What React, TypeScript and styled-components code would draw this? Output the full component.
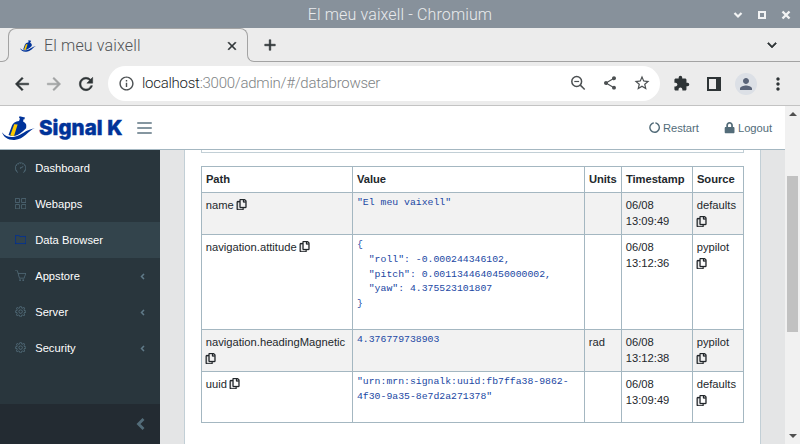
import React from "react";
import styled, { createGlobalStyle } from "styled-components";
import {
  MdAdd, MdArrowBack, MdArrowForward, MdClose, MdExpandMore, MdExtension, MdInfoOutline,
  MdMoreVert, MdPerson, MdRefresh, MdShare, MdStarBorder,
} from "react-icons/md";
import { SlBasket, SlFolder, SlGrid, SlSettings, SlSpeedometer } from "react-icons/sl";
import { FaCircleNotch, FaLock, FaRegCopy, FaAngleLeft } from "react-icons/fa";

const GlobalStyle = createGlobalStyle`
  * { box-sizing: border-box; }
  body { margin: 0; overflow: hidden; font-family: "Liberation Sans", Arial, sans-serif; }
  svg { display: block; flex: none; }
  svg path[fill="none"] { stroke: none; }
`;

const Window = styled.div`
  width: 800px;
  height: 444px;
  display: flex;
  flex-direction: column;
  background: #ececec;
  overflow: hidden;
`;

const TitleBar = styled.div`
  height: 28px;
  flex: none;
  display: grid;
  grid-template-columns: 1fr auto 1fr;
  align-items: center;
  background: #87919b;
  color: #e9ebed;
  font: 300 16px/28px Roboto, sans-serif;
`;

const WindowTitle = styled.span`
  grid-column: 2;
  white-space: nowrap;
  letter-spacing: 0.13px;
  padding-top: 1px;
`;

const WindowControls = styled.div`
  display: flex;
  justify-content: flex-end;
  gap: 14px;
  padding-right: 9px;
`;

const TabStrip = styled.div`
  height: 34px;
  flex: none;
  display: flex;
`;

const StripEdge = styled.div`
  width: 9px;
  border-bottom: 1px solid #a3a3a3;
  border-right: 1px solid #a3a3a3;
  border-bottom-right-radius: 7px;
  margin-top: 8px;
`;

const Tab = styled.div`
  width: 240px;
  height: 34px;
  margin-left: -1px;
  display: flex;
  align-items: center;
  border: 1px solid #a3a3a3;
  border-width: 1px 1px 0;
  border-radius: 8px 8px 0 0;
  padding: 0 8px 0 11px;
  color: #505356;
  font: 300 16px/32px Roboto, sans-serif;
  letter-spacing: 0.15px;
  clip-path: inset(0 0 7px 0);
`;

const TabTitle = styled.span`
  flex: 1;
  margin-left: 8px;
`;

const StripRest = styled.div`
  flex: 1;
  height: 34px;
  margin-left: -1px;
  display: flex;
  align-items: center;
  justify-content: space-between;
  padding: 0 19px 0 13px;
  border-bottom: 1px solid #a3a3a3;
  border-left: 1px solid #a3a3a3;
  border-bottom-left-radius: 7px;
  clip-path: inset(8px 0 0 0);
  color: #2e3436;
  svg { stroke-width: 0.8px; }
`;

const Toolbar = styled.div`
  height: 44px;
  flex: none;
  display: flex;
  align-items: center;
  border-bottom: 1px solid #c3c3c3;
  color: #2e3436;
`;

const NavButtons = styled.div`
  width: 108px;
  display: flex;
  gap: 12px;
  padding-left: 12px;
  svg { stroke-width: 0.6px; }
`;

const NavIcon = styled.span<{ $dim?: boolean }>`
  color: ${(p) => (p.$dim ? "#a0a2a3" : "#2e3436")};
`;

const AddressBar = styled.div`
  width: 552px;
  height: 35px;
  margin-bottom: 1px;
  border-radius: 18px;
  background: #fff;
  display: flex;
  align-items: center;
  padding: 0 9px 0 10px;
  color: #4c5052;
`;

const Url = styled.span`
  flex: 1;
  margin-left: 7px;
  font: 300 15px/35px Roboto, sans-serif;
  letter-spacing: -0.26px;
  color: #808385;
  b { font-weight: 300; color: #202426; }
`;

const AddressActions = styled.div`
  display: flex;
  align-items: center;
  gap: 15px;
  svg:first-child { margin-right: 1px; }
`;

const BrowserActions = styled.div`
  flex: 1;
  display: flex;
  align-items: center;
  padding-left: 13px;
`;

const Panel = styled.svg`
  margin: 0 14px 0 17px;
`;

const Avatar = styled.div`
  width: 22px;
  height: 22px;
  margin-right: 11px;
  border-radius: 50%;
  background: #dce0e6;
  color: #5a6478;
  display: grid;
  place-items: center;
`;

const Viewport = styled.div`
  flex: 1;
  min-height: 0;
  display: flex;
`;

const Page = styled.div`
  width: 785px;
  display: flex;
  flex-direction: column;
  font-size: 11.2px;
  line-height: 16.8px;
  color: #23282c;
`;

const Header = styled.header`
  height: 44px;
  flex: none;
  display: flex;
  align-items: center;
  background: #fff;
  border-bottom: 1px solid #a4b7c1;
  padding: 0 13px 0 2px;
`;

const Brand = styled.div`
  width: 135px;
  display: flex;
  align-items: center;
`;

const BrandName = styled.span`
  margin-left: 4px;
  font: 800 20.5px/30px Inter, sans-serif;
  letter-spacing: 0.05px;
  color: #003399;
  -webkit-text-stroke: 0.5px #003399;
  white-space: nowrap;
`;

const Burger = styled.div`
  width: 15px;
  height: 12px;
  display: flex;
  flex-direction: column;
  justify-content: space-between;
`;

const BurgerLine = styled.i`
  height: 2px;
  border-radius: 1px;
  background: #8596a0;
`;

const HeaderLinks = styled.nav`
  margin-left: auto;
  padding-top: 1px;
  display: flex;
  gap: 25px;
`;

const HeaderLink = styled.a`
  display: flex;
  align-items: center;
  gap: 3px;
  color: #536c79;
  letter-spacing: -0.03px;
`;

const Body = styled.div`
  flex: 1;
  min-height: 0;
  display: flex;
`;

const Sidebar = styled.aside`
  width: 160px;
  display: flex;
  flex-direction: column;
  background: #29363d;
`;

const NavItem = styled.a<{ $active?: boolean }>`
  height: 36px;
  display: flex;
  align-items: center;
  padding: 0 13px 0 15px;
  color: #fff;
  background: ${(p) => (p.$active ? "#33444c" : "transparent")};
  > svg:first-child {
    margin: 0 9px 1px 0;
    stroke-width: 8px;
    color: ${(p) => (p.$active ? "#003399" : "#536c79")};
  }
  > svg:last-child { color: #5f7a88; stroke-width: 12px; }
`;

const NavLabel = styled.span`
  flex: 1;
`;

const Minimizer = styled.div`
  height: 40px;
  margin-top: auto;
  display: flex;
  align-items: center;
  justify-content: flex-end;
  padding-right: 14px;
  background: #232b32;
  color: #536c79;
`;

const Content = styled.main`
  flex: 1;
  display: flex;
  padding: 0 24px;
  background: #e4e5e6;
`;

const Card = styled.section`
  flex: 1;
  padding: 0 16px;
  background: #fff;
  border: 1px solid #c2cfd6;
  border-width: 0 1px;
`;

const FilterEdge = styled.div`
  height: 3px;
  border: 1px solid #c2cfd6;
  border-top: 0;
`;

const Table = styled.table`
  width: 543px;
  margin-top: 13px;
  table-layout: fixed;
  border-collapse: separate;
  border-spacing: 0;
  border: 1px solid #a4b7c1;
  border-width: 1px 0 0 1px;
`;

const Col = styled.col<{ $w: number }>`
  width: ${(p) => p.$w}px;
`;

const Row = styled.tr<{ $h: number; $striped?: boolean }>`
  height: ${(p) => p.$h}px;
  background: ${(p) => (p.$striped ? "#f2f2f2" : "#fff")};
`;

const HeadCell = styled.th`
  padding: 4px 0 0 3.9px;
  vertical-align: top;
  text-align: left;
  letter-spacing: -0.03px;
  border: 1px solid #a4b7c1;
  border-width: 0 1px 1px 0;
`;

const Cell = styled.td`
  padding: 3.5px 4px 0 3.8px;
  vertical-align: top;
  border: 1px solid #a4b7c1;
  border-width: 0 1px 1px 0;
`;

const Value = styled.pre`
  margin: -0.3px 0 0 0.2px;
  font: 9.8px/14.7px "Liberation Mono", monospace;
  color: #1a47a3;
`;

const CopyIcon = styled(FaRegCopy)`
  display: inline-block;
  vertical-align: -1.4px;
  margin-left: -0.6px;
  stroke-width: 14px;
`;

const Scrollbar = styled.div`
  width: 15px;
  display: flex;
  flex-direction: column;
  align-items: center;
  justify-content: space-between;
  background: #f1f1f1;
  padding: 6px 0 6px;
`;

const Thumb = styled.div`
  width: 11px;
  height: 156px;
  margin-bottom: 42px;
  background: #c1c1c1;
`;

const ShipMark = ({ width, height }: { width: number; height: number }) => (
  <svg width={width} height={height} viewBox="0 0 33 24">
    <path d="M17.500 0.200l5.500 1.200-.7 2-.8-.1-.4 2.200c2.200 1.100 3.300 2.500 3.200 4.500l-.2 2.200c-2.300 2.500-5 4.900-8.600 6.700-3 1.400-6 1.300-9 .1L10 9.500c.8-2.300 3.500-4.200 7-4.600l1-2.300-1-.5z" fill="#003399" />
    <path d="M12.200 8.200l3.400.3-3.500 11.300c-1.300.2-2.500 0-3.800-.5z" fill="#ffcc00" />
    <path d="M0 16.200c3 4 7.500 5.400 12.500 4.600C20 19.400 23.500 13.500 32.800 12.300 26 14.500 22.500 23.500 12.500 23.900 6 24.200 1.300 20.800 0 16.200z" fill="#003399" />
  </svg>
);

const nav = [
  { label: "Dashboard", Icon: SlSpeedometer },
  { label: "Webapps", Icon: SlGrid },
  { label: "Data Browser", Icon: SlFolder, active: true },
  { label: "Appstore", Icon: SlBasket, sub: true },
  { label: "Server", Icon: SlSettings, sub: true },
  { label: "Security", Icon: SlSettings, sub: true },
];

const rows = [
  { h: 42, path: "name", value: '"El meu vaixell"', units: "", time: "13:09:49", source: "defaults" },
  {
    h: 95,
    path: "navigation.attitude",
    value: '{\n  "roll": -0.000244346102,\n  "pitch": 0.0011344640450000002,\n  "yaw": 4.375523101807\n}',
    units: "",
    time: "13:12:36",
    source: "pypilot",
  },
  { h: 42, path: "navigation.headingMagnetic", value: "4.376779738903", units: "rad", time: "13:12:38", source: "pypilot" },
  {
    h: 51,
    path: "uuid",
    value: '"urn:mrn:signalk:uuid:fb7ffa38-9862-\n4f30-9a35-8e7d2a271378"',
    units: "",
    time: "13:09:49",
    source: "defaults",
  },
];

export default function App() {
  return (
    <Window>
      <GlobalStyle />
      <TitleBar>
        <WindowTitle>El meu vaixell - Chromium</WindowTitle>
        <WindowControls>
          <svg width="10" height="10" viewBox="0 0 10 10" stroke="#f2f3f4" strokeWidth="2.2"><polyline points="1.5,3 5,6.5 8.5,3" fill="none" /></svg>
          <svg width="10" height="10" viewBox="0 0 10 10" fill="none" stroke="#f2f3f4" strokeWidth="2"><path d="M2 2h6v6H2z" /></svg>
          <svg width="10" height="10" viewBox="0 0 10 10" fill="none" stroke="#f2f3f4" strokeWidth="2.4"><path d="M1.500 1.500l7 7M8.500 1.500l-7 7" /></svg>
        </WindowControls>
      </TitleBar>
      <TabStrip>
        <StripEdge />
        <Tab>
          <ShipMark width={16} height={12} />
          <TabTitle>El meu vaixell</TabTitle>
          <MdClose size={14} color="#2e3436" strokeWidth={0.9} />
        </Tab>
        <StripRest>
          <MdAdd size={18} />
          <MdExpandMore size={18} />
        </StripRest>
      </TabStrip>
      <Toolbar>
        <NavButtons>
          <NavIcon><MdArrowBack size={20} /></NavIcon>
          <NavIcon $dim><MdArrowForward size={20} /></NavIcon>
          <NavIcon><MdRefresh size={20} /></NavIcon>
        </NavButtons>
        <AddressBar>
          <MdInfoOutline size={17} />
          <Url><b>localhost</b>:3000/admin/#/databrowser</Url>
          <AddressActions>
            <svg width="16" height="16" viewBox="0 0 16 16" fill="none" stroke="currentColor" strokeWidth="1.5">
              <circle cx="6.700" cy="6.500" r="4.900" /><path d="M10.300 10.100l4.400 4.400" /><path d="M4.300 6.500h4.800" strokeWidth="1.200" />
            </svg>
            <MdShare size={16} />
            <MdStarBorder size={18} />
          </AddressActions>
        </AddressBar>
        <BrowserActions>
          <MdExtension size={17} />
          <Panel width="14" height="14" viewBox="0 0 14 14"><path d="M0 0h14v14H0zM2 2v10h7V2z" fill="currentColor" fillRule="evenodd" /></Panel>
          <Avatar><MdPerson size={18} /></Avatar>
          <MdMoreVert size={20} />
        </BrowserActions>
      </Toolbar>
      <Viewport>
        <Page>
          <Header>
            <Brand>
              <ShipMark width={33} height={24} />
              <BrandName>Signal K</BrandName>
            </Brand>
            <Burger><BurgerLine /><BurgerLine /><BurgerLine /></Burger>
            <HeaderLinks>
              <HeaderLink><FaCircleNotch size={11.2} />Restart</HeaderLink>
              <HeaderLink><FaLock size={11.2} />Logout</HeaderLink>
            </HeaderLinks>
          </Header>
          <Body>
            <Sidebar>
              {nav.map(({ label, Icon, active, sub }) => (
                <NavItem key={label} $active={active}>
                  <Icon size={11.2} />
                  <NavLabel>{label}</NavLabel>
                  {sub && <FaAngleLeft size={9} />}
                </NavItem>
              ))}
              <Minimizer>
                <svg width="12" height="12" viewBox="0 0 12 12" fill="none" stroke="currentColor" strokeWidth="2.800"><path d="M9.500 1L4.500 6l5 5" /></svg>
              </Minimizer>
            </Sidebar>
            <Content>
              <Card>
                <FilterEdge />
                <Table>
                  <colgroup><Col $w={151} /><Col $w={232} /><Col $w={37} /><Col $w={71} /><Col $w={51} /></colgroup>
                  <thead>
                    <Row $h={26}>
                      {["Path", "Value", "Units", "Timestamp", "Source"].map((t) => <HeadCell key={t}>{t}</HeadCell>)}
                    </Row>
                  </thead>
                  <tbody>
                    {rows.map((r, i) => (
                      <Row key={r.path} $h={r.h} $striped={i % 2 === 0}>
                        <Cell>{r.path} <CopyIcon size={11.2} /></Cell>
                        <Cell><Value>{r.value}</Value></Cell>
                        <Cell>{r.units}</Cell>
                        <Cell>06/08<br />{r.time}</Cell>
                        <Cell>{r.source} <CopyIcon size={11.2} /></Cell>
                      </Row>
                    ))}
                  </tbody>
                </Table>
              </Card>
            </Content>
          </Body>
        </Page>
        <Scrollbar>
          <svg width="8" height="4" viewBox="0 0 8 4"><path d="M0 4l4-4 4 4z" fill="#505050" /></svg>
          <Thumb />
          <svg width="8" height="4" viewBox="0 0 8 4"><path d="M0 0l4 4 4-4z" fill="#505050" /></svg>
        </Scrollbar>
      </Viewport>
    </Window>
  );
}
